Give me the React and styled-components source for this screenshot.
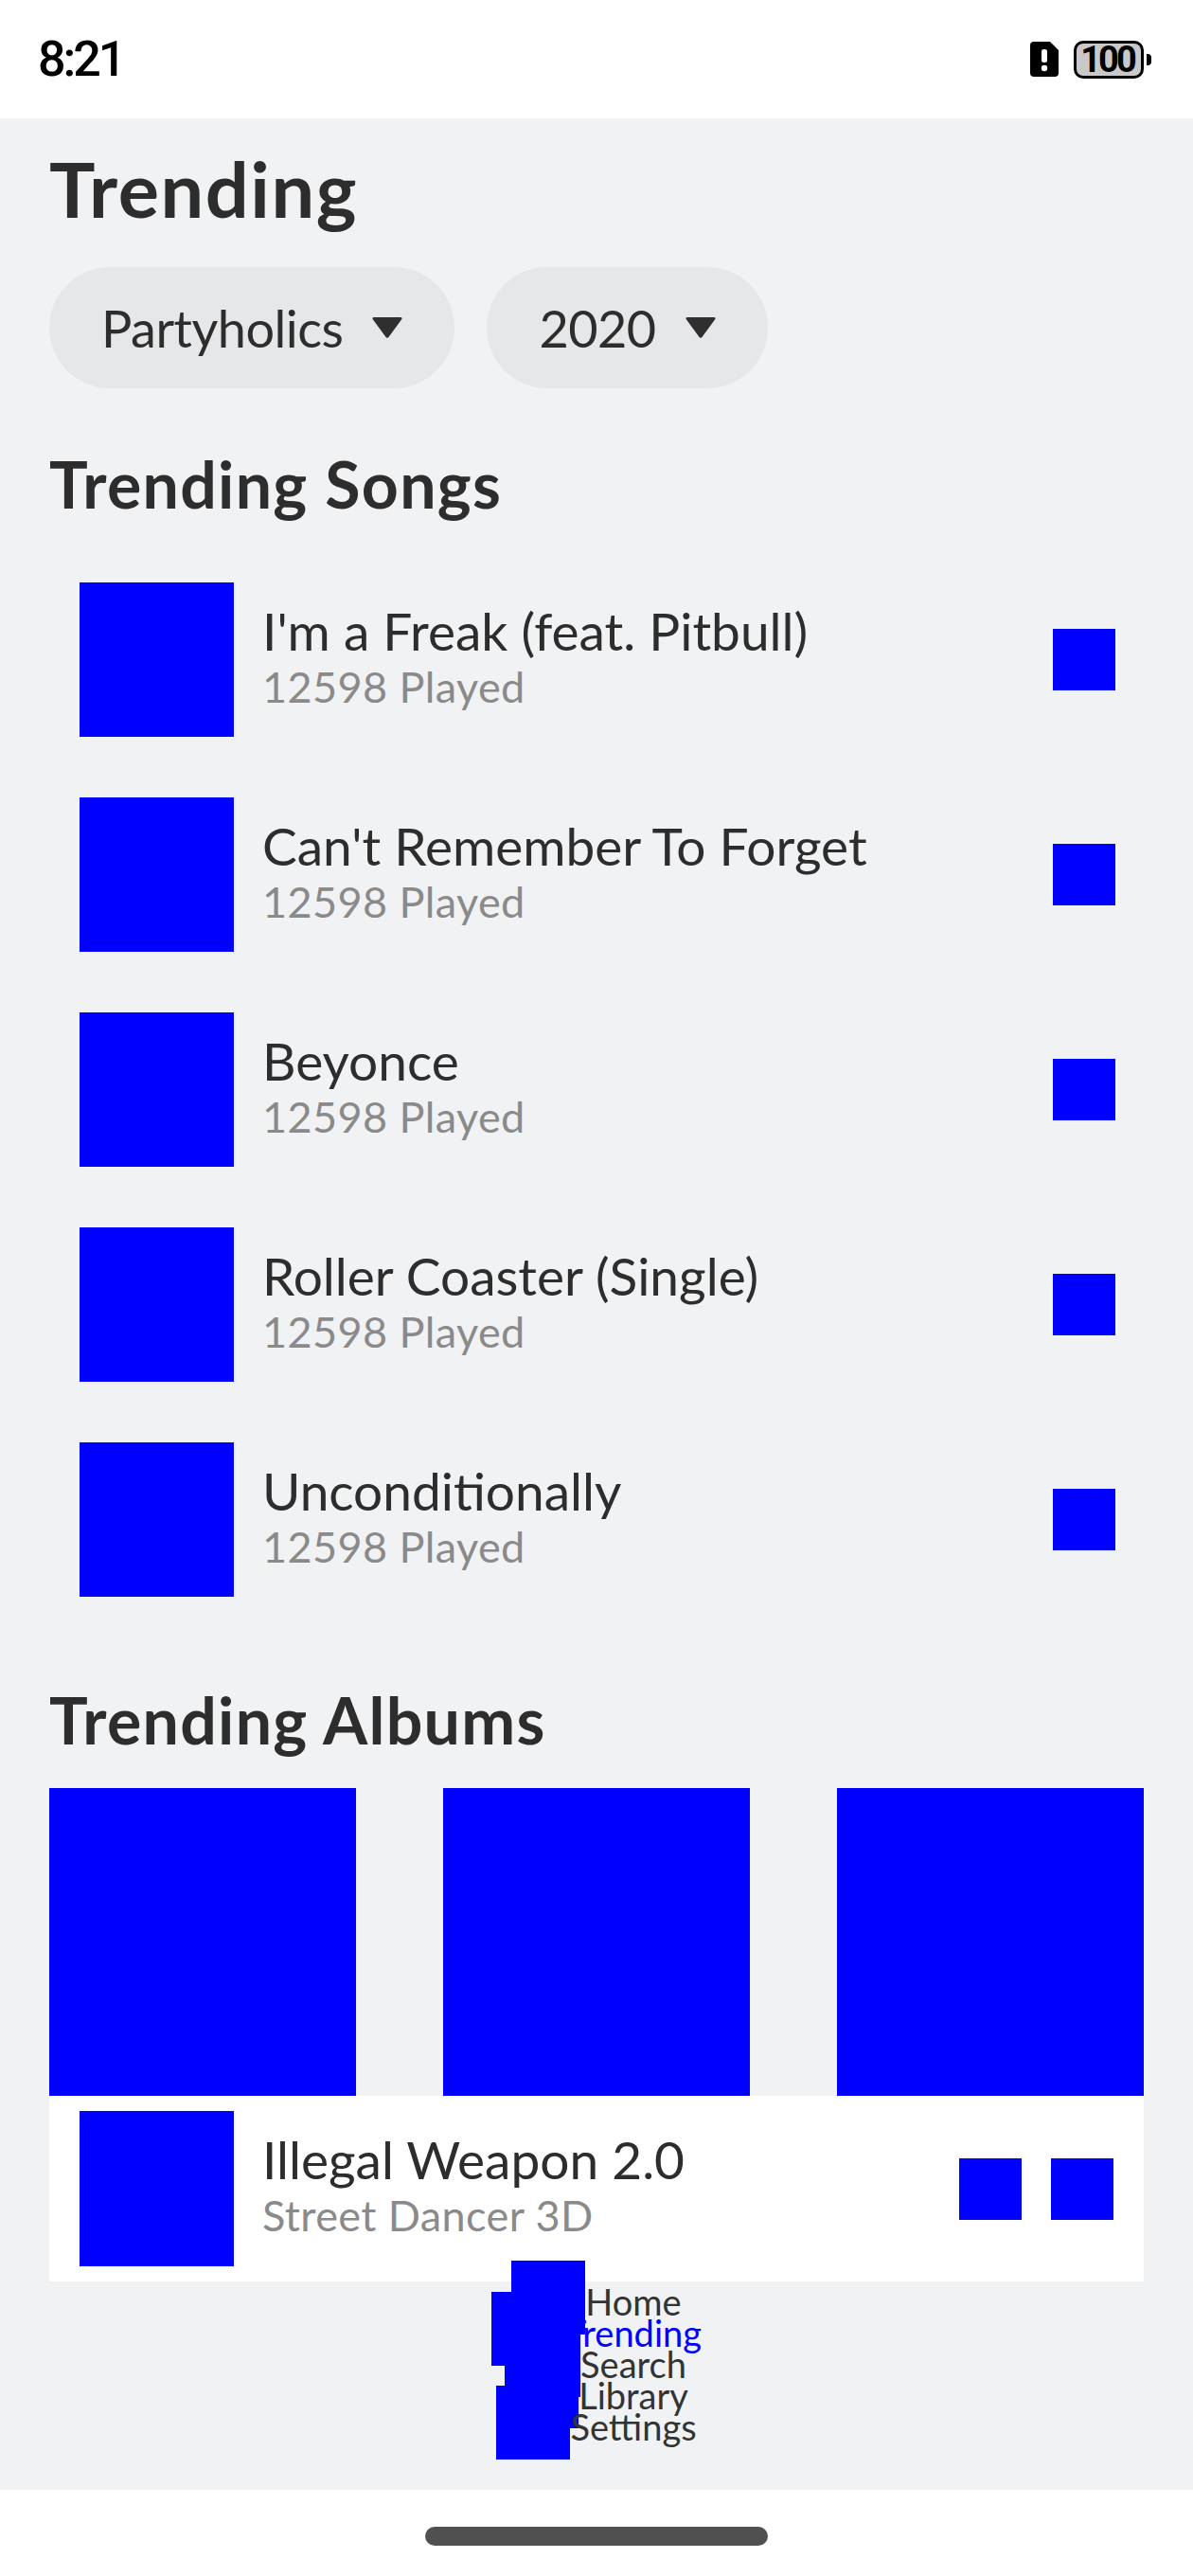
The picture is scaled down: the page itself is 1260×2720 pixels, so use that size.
import React from 'react';
import styled, { createGlobalStyle } from 'styled-components';

const GlobalStyle = createGlobalStyle`
  html, body {
    margin: 0;
    padding: 0;
    background: #ffffff;
  }
  * { box-sizing: border-box; }
`;

const songs = [
  "I'm a Freak (feat. Pitbull)",
  "Can't Remember To Forget",
  'Beyonce',
  'Roller Coaster (Single)',
  'Unconditionally',
];

const navItems = ['Home', 'Trending', 'Search', 'Library', 'Settings'];

const App = () => {
  return (
    <Screen>
      <GlobalStyle />
      <StatusBar>
        <Clock>8:21</Clock>
        <StatusIcons>
          <svg width="30" height="37" viewBox="0 0 30 37">
            <path d="M4 0 H21 L30 9 V33 A4 4 0 0 1 26 37 H4 A4 4 0 0 1 0 33 V4 A4 4 0 0 1 4 0 Z" fill="#000" />
            <rect x="12" y="8" width="6" height="14" rx="2.5" fill="#fff" />
            <circle cx="15" cy="28" r="3.2" fill="#fff" />
          </svg>
          <Battery>100</Battery>
        </StatusIcons>
      </StatusBar>

      <Main>
        <Title>Trending</Title>
        <Filters>
          <Pill>
            Partyholics
            <Caret />
          </Pill>
          <Pill>
            2020
            <Caret />
          </Pill>
        </Filters>

        <SectionTitle $top={61}>Trending Songs</SectionTitle>
        <SongList>
          {songs.map((name) => (
            <SongRow key={name}>
              <Cover />
              <SongText>
                <SongName>{name}</SongName>
                <SongMeta>12598 Played</SongMeta>
              </SongText>
              <SmallBox />
            </SongRow>
          ))}
        </SongList>

        <SectionTitle $top={58}>Trending Albums</SectionTitle>
        <Albums>
          <AlbumArt />
          <AlbumArt />
          <AlbumArt />
        </Albums>

        <Player>
          <Cover />
          <SongText>
            <SongName>Illegal Weapon 2.0</SongName>
            <SongMeta>Street Dancer 3D</SongMeta>
          </SongText>
          <PlayerButtons>
            <SmallBox />
            <SmallBox />
          </PlayerButtons>
        </Player>

        <Nav>
          {navItems.map((item) => (
            <NavItem key={item}>
              <NavIcon />
              <NavLabel $active={item === 'Trending'}>{item}</NavLabel>
            </NavItem>
          ))}
        </Nav>
      </Main>

      <SystemBar>
        <Handle />
      </SystemBar>
    </Screen>
  );
};

const Caret = () => (
  <svg width="34" height="24" viewBox="0 0 34 24" style={{ flexShrink: 0 }}>
    <path d="M3 1 H31 Q33.5 1 32 3.5 L18.8 21.5 Q17 24 15.2 21.5 L2 3.5 Q0.5 1 3 1 Z" fill="#2f2f2f" />
  </svg>
);

export default App;

const Screen = styled.div`
  width: 1260px;
  min-height: 2720px;
  display: flex;
  flex-direction: column;
  font-family: 'Lato', 'Inter', sans-serif;
  color: #2d2d2d;
`;

const StatusBar = styled.div`
  height: 125px;
  background: #ffffff;
  display: flex;
  align-items: center;
  justify-content: space-between;
  padding: 0 42px 0 40px;
`;

const Clock = styled.span`
  font-family: 'Roboto', 'Liberation Sans', sans-serif;
  font-size: 52px;
  font-weight: 500;
  letter-spacing: -3px;
  color: #000;
`;

const StatusIcons = styled.div`
  display: flex;
  align-items: center;
  gap: 16px;
`;

const Battery = styled.div`
  position: relative;
  width: 74px;
  height: 40px;
  border: 3px solid #000;
  border-radius: 10px;
  background: #c9c9c9;
  display: flex;
  align-items: center;
  justify-content: center;
  font-family: 'Roboto', 'Liberation Sans', sans-serif;
  font-size: 38px;
  font-weight: 700;
  letter-spacing: -3px;
  padding-right: 3px;
  color: #000;
  margin-right: 10px;

  &::after {
    content: '';
    position: absolute;
    right: -11px;
    top: 11px;
    width: 5px;
    height: 12px;
    border-radius: 0 4px 4px 0;
    background: #000;
  }
`;

const Main = styled.main`
  flex: 1;
  background: #f1f2f4;
  padding: 26px 52px 0;
  display: flex;
  flex-direction: column;
`;

const Title = styled.h1`
  margin: 0;
  font-size: 81px;
  line-height: 96px;
  font-weight: 700;
  letter-spacing: 1.6px;
  color: #2d2d2d;
`;

const Filters = styled.div`
  display: flex;
  gap: 34px;
  margin-top: 35px;
`;

const Pill = styled.div`
  height: 128px;
  border-radius: 64px;
  background: #e6e7e9;
  display: flex;
  align-items: center;
  gap: 30px;
  padding: 0 54px 0 55px;
  font-size: 54px;
  letter-spacing: -0.5px;
  color: #2d2d2d;
`;

const SectionTitle = styled.h2`
  margin: ${(p) => p.$top}px 0 32px;
  font-size: 68px;
  line-height: 80px;
  font-weight: 700;
  letter-spacing: 1.3px;
  color: #2d2d2d;
`;

const SongList = styled.div`
  display: flex;
  flex-direction: column;
`;

const SongRow = styled.div`
  display: flex;
  align-items: center;
  padding: 32px 30px 32px 32px;
`;

const Cover = styled.div`
  width: 163px;
  height: 163px;
  flex-shrink: 0;
  background: #0000ff;
`;

const SongText = styled.div`
  flex: 1;
  display: flex;
  flex-direction: column;
  margin-left: 30px;
  min-width: 0;
`;

const SongName = styled.div`
  font-size: 55px;
  line-height: 56px;
  color: #2d2d2d;
  white-space: nowrap;
`;

const SongMeta = styled.div`
  font-size: 45px;
  line-height: 62px;
  letter-spacing: 0.4px;
  color: #8a8a8a;
  white-space: nowrap;
`;

const SmallBox = styled.div`
  width: 66px;
  height: 65px;
  flex-shrink: 0;
  background: #0000ff;
`;

const Albums = styled.div`
  display: flex;
  justify-content: space-between;
`;

const AlbumArt = styled.div`
  width: 324px;
  height: 325px;
  background: #0000ff;
`;

const Player = styled.div`
  display: flex;
  align-items: center;
  background: #ffffff;
  padding: 16px 32px 16px 32px;

  ${Cover} {
    height: 164px;
  }
`;

const PlayerButtons = styled.div`
  display: flex;
  gap: 31px;
`;

const Nav = styled.nav`
  display: flex;
  flex-direction: column;
  margin-top: 5px;
`;

const NavItem = styled.div`
  display: flex;
  justify-content: center;
  align-items: flex-start;
  height: 33px;
`;

const NavIcon = styled.div`
  width: 78px;
  height: 78px;
  flex-shrink: 0;
  margin: -27px 0 -18px;
  background: #0000ff;
`;

const NavLabel = styled.span`
  font-size: 38px;
  line-height: 33px;
  color: ${(p) => (p.$active ? '#0000ff' : '#333333')};
`;

const SystemBar = styled.div`
  height: 91px;
  background: #ffffff;
  display: flex;
  justify-content: center;
  padding-top: 39px;
`;

const Handle = styled.div`
  width: 362px;
  height: 20px;
  border-radius: 10px;
  background: #505050;
`;
